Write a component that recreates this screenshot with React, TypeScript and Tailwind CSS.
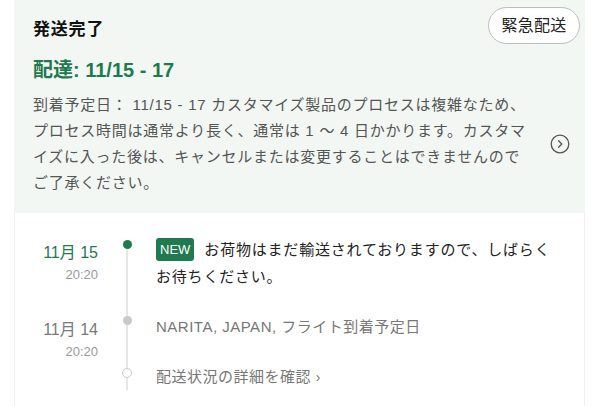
import React from 'react';

const font = { fontFamily: '"Liberation Sans", "Noto Sans CJK JP", sans-serif' };

function ChevronCircle() {
  return (
    <svg width="20" height="20" viewBox="0 0 20 20" fill="none" stroke="#555" strokeWidth="1.3">
      <circle cx="10" cy="10" r="8.8" />
      <path d="M8.6 6.8 L11.8 10 L8.6 13.2" strokeLinecap="round" strokeLinejoin="round" />
    </svg>
  );
}

function App() {
  return (
    <div className="w-[600px] h-[406px] overflow-hidden bg-white" style={font}>
      <div className="ml-[14px] w-[571px] h-full flex flex-col">
        {/* summary */}
        <div className="bg-[#f2f7f4] h-[213px] shrink-0 pl-[19px] pr-[15px] pt-[7px]">
          <div className="flex items-start justify-between">
            <h1 className="mt-[11px] text-[17px] leading-[24px] font-bold text-[#111] tracking-[0.8px]">発送完了</h1>
            <button className="h-[37px] w-[92px] mr-[-10px] rounded-full border border-[#bdbdbd] bg-white text-[16px] text-[#222] tracking-[0.3px]">
              緊急配送
            </button>
          </div>
          <div className="mt-[14px] text-[20px] leading-[24px] font-bold text-[#1f7a4f]">配達: 11/15 - 17</div>
          <div className="mt-[10px] flex items-center justify-between">
            <p className="text-[15px] leading-[26px] text-[#555] tracking-[0.75px]">
              到着予定日： 11/15 - 17 カスタマイズ製品のプロセスは複雑なため、<br />
              プロセス時間は通常より長く、通常は 1 ～ 4 日かかります。カスタマ<br />
              イズに入った後は、キャンセルまたは変更することはできませんので<br />
              ご了承ください。
            </p>
            <ChevronCircle />
          </div>
        </div>

        {/* timeline */}
        <div className="flex-1 border-x border-[#f0f0f0] pt-[23px]">
          <div className="flex">
            <div className="w-[83px] shrink-0 text-right pt-[3px]">
              <div className="text-[16px] leading-[27px] text-[#1f7a4f]">11月 15</div>
              <div className="text-[13px] leading-[18px] text-[#9a9a9a]">20:20</div>
            </div>
            <div className="w-[58px] shrink-0 flex flex-col items-center">
              <div className="mt-[4px] w-[9px] h-[9px] rounded-full bg-[#1f7a4f]" />
              <div className="flex-1 w-[2px] bg-[#e6e6e6]" />
            </div>
            <div className="flex-1 pb-[23px] text-[15px] leading-[27px] text-[#222] tracking-[0.8px]">
              <span className="inline-block align-middle mr-[10px] mt-[-3px] h-[23px] px-[4px] rounded-[3px] bg-[#1f7a4f] text-white text-[13px] leading-[23px] tracking-normal">
                NEW
              </span>
              お荷物はまだ輸送されておりますので、しばらく<br />
              お待ちください。
            </div>
          </div>

          <div className="flex">
            <div className="w-[83px] shrink-0 text-right pt-[3px] pb-[1px]">
              <div className="text-[16px] leading-[27px] text-[#7a7a7a]">11月 14</div>
              <div className="text-[13px] leading-[18px] text-[#9a9a9a]">20:20</div>
            </div>
            <div className="w-[58px] shrink-0 flex flex-col items-center">
              <div className="h-[3px] w-[2px] bg-[#e6e6e6]" />
              <div className="w-[9px] h-[9px] rounded-full bg-[#c9c9c9]" />
              <div className="flex-1 w-[2px] bg-[#e6e6e6]" />
            </div>
            <div className="flex-1 text-[15px] leading-[27px] text-[#777] tracking-[0.5px]">
              NARITA, JAPAN, フライト到着予定日
            </div>
          </div>

          <div className="flex">
            <div className="w-[83px] shrink-0" />
            <div className="w-[58px] shrink-0 flex flex-col items-center">
              <div className="h-[6px] w-[2px] bg-[#e6e6e6]" />
              <div className="w-[10px] h-[10px] rounded-full border border-[#c9c9c9] bg-white" />
              <div className="h-[12px] w-[2px] bg-[#e6e6e6]" />
            </div>
            <div className="flex-1 pt-[1px] text-[15px] leading-[27px] text-[#777] tracking-[0.5px]">
              配送状況の詳細を確認 <span className="text-[14px]">›</span>
            </div>
          </div>
        </div>
      </div>
    </div>
  );
}

export default App;
